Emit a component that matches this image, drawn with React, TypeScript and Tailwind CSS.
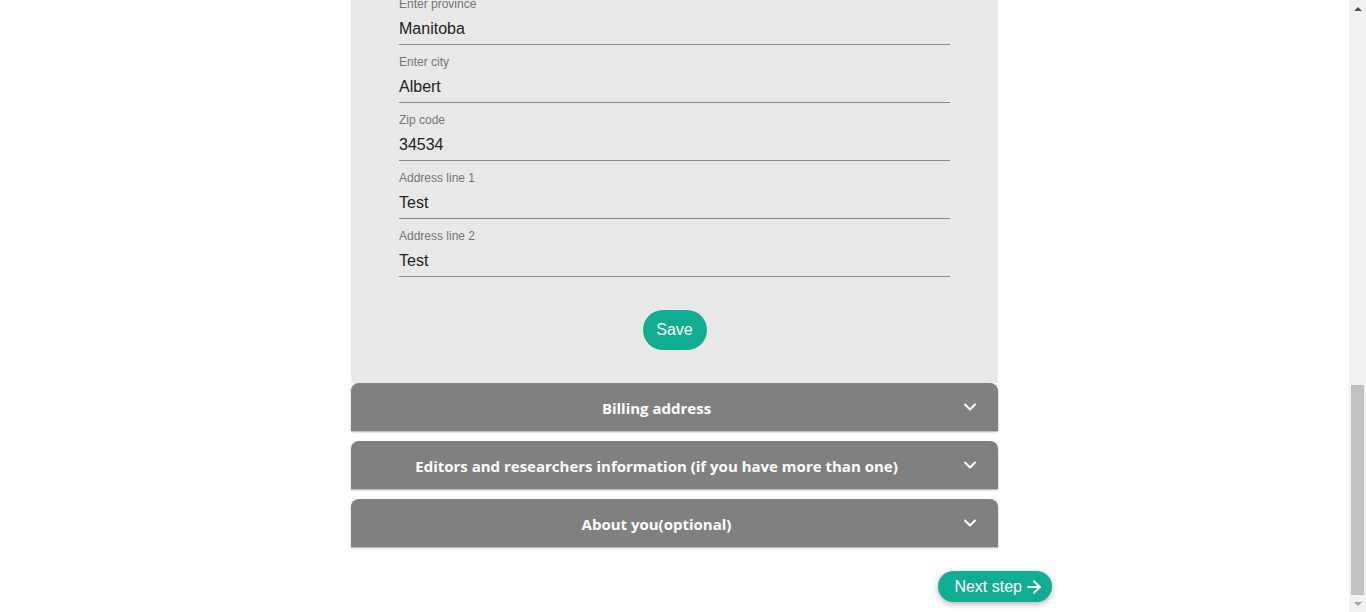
import { ArrowRight } from 'lucide-react';

const fields = [
  { label: 'Enter province', value: 'Manitoba' },
  { label: 'Enter city', value: 'Albert' },
  { label: 'Zip code', value: '34534' },
  { label: 'Address line 1', value: 'Test' },
  { label: 'Address line 2', value: 'Test' },
];

const sections = [
  'Billing address',
  'Editors and researchers information (if you have more than one)',
  'About you(optional)',
];

function Chevron() {
  return (
    <svg width="14" height="10" viewBox="0 0 14 10" fill="none">
      <path d="M2 2.5L7 7.5L12 2.5" stroke="white" strokeWidth="2" strokeLinecap="round" strokeLinejoin="round" />
    </svg>
  );
}

export default function App() {
  return (
    <div className="flex h-[612px] w-full overflow-hidden bg-white font-['Liberation_Sans',Arial,sans-serif]">
      <div className="flex-1 overflow-hidden">
        <div className="mx-auto w-[647px]">
          <div className="-mt-[13px] bg-[#e8e8e8] px-[48px] pb-[33px]">
            {fields.map((f) => (
              <div key={f.label} className="pt-[10px]">
                <div className="h-[14px] text-[12px] leading-[14px] text-[#757575]">{f.label}</div>
                <div className="flex h-[34px] items-center pt-[2px] border-b border-[#8a8a8a] text-[16px] text-[#222]">
                  {f.value}
                </div>
              </div>
            ))}
            <div className="flex justify-center pt-[33px]">
              <button className="h-[40px] w-[64px] rounded-full bg-[#10ad93] text-[16px] text-white">Save</button>
            </div>
          </div>
          <div className="flex flex-col gap-[10px] bg-white">
            {sections.map((s) => (
              <div
                key={s}
                className="flex h-[48px] items-center rounded-t-[8px] bg-[#808080] shadow-[0_1px_2px_rgba(0,0,0,0.35)]"
              >
                <div className="flex-1 pt-[2px] text-center font-['Open_Sans',sans-serif] text-[15px] font-bold text-white">
                  {s}
                </div>
                <div className="flex w-[36px] justify-start pl-[1px]">
                  <Chevron />
                </div>
              </div>
            ))}
          </div>
          <div className="-mr-[54px] flex justify-end pt-[24px]">
            <button className="flex h-[31px] items-center gap-[2px] rounded-full bg-[#10ad93] pl-[16px] pr-[8px] text-[16px] text-white shadow-[0_2px_6px_rgba(0,0,0,0.3)]">
              Next step
              <ArrowRight size={20} strokeWidth={2.5} />
            </button>
          </div>
        </div>
      </div>
      <div className="flex w-[17px] flex-col items-center bg-[#f1f1f1]">
        <div className="flex h-[17px] items-center justify-center">
          <div className="h-0 w-0 border-x-[4px] border-b-[4px] border-x-transparent border-b-[#505050]" />
        </div>
        <div className="flex-1" />
        <div className="h-[210px] w-[13px] bg-[#c1c1c1]" />
        <div className="flex h-[17px] items-center justify-center">
          <div className="h-0 w-0 border-x-[4px] border-t-[4px] border-x-transparent border-t-[#a3a3a3]" />
        </div>
      </div>
    </div>
  );
}
